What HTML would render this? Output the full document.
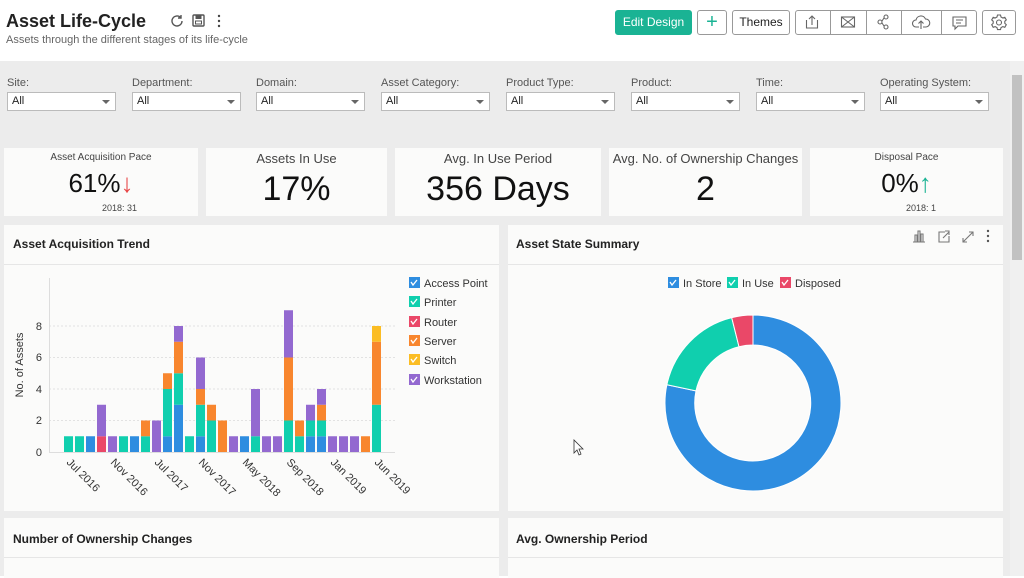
<!DOCTYPE html>
<html><head><meta charset="utf-8"><style>
*{box-sizing:border-box;margin:0;padding:0}
body{width:1024px;height:576px;overflow:hidden;background:#fff;font-family:"Liberation Sans",sans-serif;color:#222;position:relative}
.abs{position:absolute}
.gray{position:absolute;left:0;top:61px;width:1010px;height:515px;background:#ececec}
.sb{position:absolute;left:1010px;top:61px;width:14px;height:515px;background:#f0f0f0}
.sbt{position:absolute;left:1012px;top:75px;width:10px;height:185px;background:#c2c2c2}
.flt{position:absolute;top:77px;font-size:11px;color:#555}
.sel{position:absolute;top:92px;width:109px;height:19px;border:1px solid #bbb;background:#fff;font-size:11px;padding:2px 4px;color:#222}
.sel:after{content:"";position:absolute;right:5px;top:7px;border:4px solid transparent;border-top:4px solid #666}
.card{position:absolute;background:#fbfbfa}
.kt{position:absolute;width:100%;text-align:center;color:#444}
.btn{position:absolute;top:10px;height:25px;border:1px solid #999;border-radius:3px;background:#fff;font-size:12px;text-align:center;line-height:23px}
.ph{position:absolute;left:12px;font-size:12px;font-weight:bold;color:#222}
</style></head><body>
<div class="abs" style="left:6px;top:11px;font-size:18px;font-weight:bold;color:#222">Asset Life-Cycle</div>
<div class="abs" style="left:6px;top:34px;font-size:11px;color:#666">Assets through the different stages of its life-cycle</div>
<svg class="abs" style="left:168px;top:12px" width="60" height="18" viewBox="0 0 60 18">
<path d="M14 9a5 5 0 1 1-1.5-3.6" fill="none" stroke="#555" stroke-width="1.4"/><path d="M13 3v3h-3" fill="none" stroke="#555" stroke-width="1.4"/>
<rect x="25" y="3" width="11" height="11" rx="1" fill="none" stroke="#555" stroke-width="1.4"/><rect x="27.5" y="3" width="6" height="4" fill="#555"/><rect x="27.5" y="9" width="6" height="3" fill="none" stroke="#555"/>
<circle cx="51" cy="4" r="1.2" fill="#444"/><circle cx="51" cy="9" r="1.2" fill="#444"/><circle cx="51" cy="14" r="1.2" fill="#444"/></svg>
<div class="btn" style="left:615px;width:77px;background:#1ab394;border-color:#1ab394;color:#fff">Edit Design</div>
<div class="btn" style="left:697px;width:30px;color:#1ab394;font-size:20px;line-height:22px">+</div>
<div class="btn" style="left:732px;width:58px">Themes</div>
<div class="btn" style="left:795px;width:182px"></div>
<svg class="abs" style="left:795px;top:10px" width="182" height="25" viewBox="0 0 182 25">
<g stroke="#999" fill="none"><line x1="35.5" y1="0" x2="35.5" y2="25"/><line x1="71.5" y1="0" x2="71.5" y2="25"/><line x1="106.5" y1="0" x2="106.5" y2="25"/><line x1="146.5" y1="0" x2="146.5" y2="25"/></g>
<g stroke="#666" fill="none" stroke-width="1.1">
<path d="M11.5 10v8h11v-8M17 15V6M14 9l3-3 3 3"/>
<rect x="46.5" y="7" width="13" height="10"/><path d="M46.5 7l13 10M59.5 7l-13 10"/>
<circle cx="85" cy="12" r="2"/><circle cx="91" cy="7" r="2"/><circle cx="91" cy="17" r="2"/><path d="M87 11l2-3M87 13l2 3"/>
<path d="M124 17h-3a3.5 3.5 0 0 1 0-7 5 5 0 0 1 9.5-1 3.5 3.5 0 0 1 .5 8h-3M126 19v-8M123.5 13.5l2.5-2.5 2.5 2.5"/>
<path d="M158 7h13v9h-8l-3 3v-3h-2z"/><path d="M161 10h7M161 13h5"/></g></svg>
<div class="btn" style="left:982px;width:34px"></div>
<svg class="abs" style="left:982px;top:10px" width="34" height="25"><g stroke="#666" fill="none" stroke-width="1.1"><circle cx="17" cy="12.5" r="2.5"/><path d="M15.5 5h3l.5 2 1.8 1 2-.7 1.5 2.6-1.5 1.4v2l1.5 1.4-1.5 2.6-2-.7-1.8 1-.5 2h-3l-.5-2-1.8-1-2 .7-1.5-2.6 1.5-1.4v-2l-1.5-1.4 1.5-2.6 2 .7 1.8-1z"/></g></svg>

<div class="gray"></div>
<div class="sb"></div><div class="sbt"></div>
<div class="flt" style="left:7px">Site:</div><div class="sel" style="left:7px">All</div>
<div class="flt" style="left:132px">Department:</div><div class="sel" style="left:132px">All</div>
<div class="flt" style="left:256px">Domain:</div><div class="sel" style="left:256px">All</div>
<div class="flt" style="left:381px">Asset Category:</div><div class="sel" style="left:381px">All</div>
<div class="flt" style="left:506px">Product Type:</div><div class="sel" style="left:506px">All</div>
<div class="flt" style="left:631px">Product:</div><div class="sel" style="left:631px">All</div>
<div class="flt" style="left:756px">Time:</div><div class="sel" style="left:756px">All</div>
<div class="flt" style="left:880px">Operating System:</div><div class="sel" style="left:880px">All</div>

<div class="card" style="left:4px;top:148px;width:194px;height:68px"><div class="kt" style="top:4px;font-size:10px">Asset Acquisition Pace</div><div class="kt" style="top:20px;font-size:26px;color:#111">61%<span style="color:#e84848">↓</span></div><div class="abs" style="left:98px;top:55px;font-size:9px;color:#444">2018: 31</div></div>
<div class="card" style="left:206px;top:148px;width:181px;height:68px"><div class="kt" style="top:3px;font-size:13px">Assets In Use</div><div class="kt" style="top:22px;font-size:34px;color:#111">17%</div></div>
<div class="card" style="left:395px;top:148px;width:206px;height:68px"><div class="kt" style="top:3px;font-size:13px">Avg. In Use Period</div><div class="kt" style="top:22px;font-size:34px;color:#111">356 Days</div></div>
<div class="card" style="left:609px;top:148px;width:193px;height:68px"><div class="kt" style="top:3px;font-size:13px">Avg. No. of Ownership Changes</div><div class="kt" style="top:22px;font-size:34px;color:#111">2</div></div>
<div class="card" style="left:810px;top:148px;width:193px;height:68px"><div class="kt" style="top:4px;font-size:10px">Disposal Pace</div><div class="kt" style="top:20px;font-size:26px;color:#111">0%<span style="color:#1ab394">↑</span></div><div class="abs" style="left:96px;top:55px;font-size:9px;color:#444">2018: 1</div></div>

<div class="card" style="left:4px;top:225px;width:495px;height:286px"><div class="ph" style="left:9px;top:12px">Asset Acquisition Trend</div><div class="abs" style="left:0;top:39px;width:100%;height:1px;background:#e6e6e6"></div></div>
<div class="card" style="left:508px;top:225px;width:495px;height:286px"><div class="ph" style="left:8px;top:12px">Asset State Summary</div><div class="abs" style="left:0;top:39px;width:100%;height:1px;background:#e6e6e6"></div></div>
<svg class="abs" style="left:910px;top:228px" width="85" height="16"><g stroke="#777" fill="none" stroke-width="1.1"><path d="M3 14h12M5 14V7h2v7M8 14V3h2v11M11 14V6h2v8"/><path d="M35 4h-6v10h10V8M33 10l6-6M35 3h4v4"/><path d="M53 14l10-10M53 10v4h4M59 4h4v4"/></g><g fill="#555"><circle cx="78" cy="3" r="1.2"/><circle cx="78" cy="8" r="1.2"/><circle cx="78" cy="13" r="1.2"/></g></svg>

<div class="card" style="left:4px;top:518px;width:495px;height:60px"><div class="ph" style="left:9px;top:14px">Number of Ownership Changes</div><div class="abs" style="left:0;top:39px;width:100%;height:1px;background:#e6e6e6"></div></div>
<div class="card" style="left:508px;top:518px;width:495px;height:60px"><div class="ph" style="left:8px;top:14px">Avg. Ownership Period</div><div class="abs" style="left:0;top:39px;width:100%;height:1px;background:#e6e6e6"></div></div>

<svg class="abs" style="left:0;top:0" width="1010" height="576">
<g stroke="#e2e2e2" stroke-dasharray="2 2"><line x1="49" y1="326" x2="395" y2="326"/><line x1="49" y1="357.5" x2="395" y2="357.5"/><line x1="49" y1="389" x2="395" y2="389"/><line x1="49" y1="420.5" x2="395" y2="420.5"/></g>
<line x1="49.5" y1="278" x2="49.5" y2="452" stroke="#ddd"/><line x1="49" y1="452.5" x2="395" y2="452.5" stroke="#ddd"/>
<g font-size="11" fill="#333" text-anchor="end"><text x="42" y="456">0</text><text x="42" y="424">2</text><text x="42" y="393">4</text><text x="42" y="361">6</text><text x="42" y="330">8</text></g>
<text transform="translate(23,365) rotate(-90)" font-size="11" fill="#333" text-anchor="middle">No. of Assets</text>
<g font-size="11" fill="#333">
<text transform="translate(66,463) rotate(45)">Jul 2016</text>
<text transform="translate(110,463) rotate(45)">Nov 2016</text>
<text transform="translate(154,463) rotate(45)">Jul 2017</text>
<text transform="translate(198,463) rotate(45)">Nov 2017</text>
<text transform="translate(242,463) rotate(45)">May 2018</text>
<text transform="translate(286,463) rotate(45)">Sep 2018</text>
<text transform="translate(330,463) rotate(45)">Jan 2019</text>
<text transform="translate(374,463) rotate(45)">Jun 2019</text></g>
<g>
<rect x="64" y="436.25" width="9" height="15.75" fill="#10cfae"/>
<rect x="75" y="436.25" width="9" height="15.75" fill="#10cfae"/>
<rect x="86" y="436.25" width="9" height="15.75" fill="#2e8de0"/>
<rect x="97" y="436.25" width="9" height="15.75" fill="#ea4868"/><rect x="97" y="404.75" width="9" height="31.5" fill="#9369d0"/>
<rect x="108" y="436.25" width="9" height="15.75" fill="#9369d0"/>
<rect x="119" y="436.25" width="9" height="15.75" fill="#10cfae"/>
<rect x="130" y="436.25" width="9" height="15.75" fill="#2e8de0"/>
<rect x="141" y="436.25" width="9" height="15.75" fill="#10cfae"/><rect x="141" y="420.5" width="9" height="15.75" fill="#f8862e"/>
<rect x="152" y="420.5" width="9" height="31.5" fill="#9369d0"/>
<rect x="163" y="436.25" width="9" height="15.75" fill="#2e8de0"/><rect x="163" y="389" width="9" height="47.25" fill="#10cfae"/><rect x="163" y="373.25" width="9" height="15.75" fill="#f8862e"/>
<rect x="174" y="404.75" width="9" height="47.25" fill="#2e8de0"/><rect x="174" y="373.25" width="9" height="31.5" fill="#10cfae"/><rect x="174" y="341.75" width="9" height="31.5" fill="#f8862e"/><rect x="174" y="326" width="9" height="15.75" fill="#9369d0"/>
<rect x="185" y="436.25" width="9" height="15.75" fill="#10cfae"/>
<rect x="196" y="436.25" width="9" height="15.75" fill="#2e8de0"/><rect x="196" y="404.75" width="9" height="31.5" fill="#10cfae"/><rect x="196" y="389" width="9" height="15.75" fill="#f8862e"/><rect x="196" y="357.5" width="9" height="31.5" fill="#9369d0"/>
<rect x="207" y="420.5" width="9" height="31.5" fill="#10cfae"/><rect x="207" y="404.75" width="9" height="15.75" fill="#f8862e"/>
<rect x="218" y="420.5" width="9" height="31.5" fill="#f8862e"/>
<rect x="229" y="436.25" width="9" height="15.75" fill="#9369d0"/>
<rect x="240" y="436.25" width="9" height="15.75" fill="#2e8de0"/>
<rect x="251" y="436.25" width="9" height="15.75" fill="#10cfae"/><rect x="251" y="389" width="9" height="47.25" fill="#9369d0"/>
<rect x="262" y="436.25" width="9" height="15.75" fill="#9369d0"/>
<rect x="273" y="436.25" width="9" height="15.75" fill="#9369d0"/>
<rect x="284" y="420.5" width="9" height="31.5" fill="#10cfae"/><rect x="284" y="357.5" width="9" height="63" fill="#f8862e"/><rect x="284" y="310.25" width="9" height="47.25" fill="#9369d0"/>
<rect x="295" y="436.25" width="9" height="15.75" fill="#10cfae"/><rect x="295" y="420.5" width="9" height="15.75" fill="#f8862e"/>
<rect x="306" y="436.25" width="9" height="15.75" fill="#2e8de0"/><rect x="306" y="420.5" width="9" height="15.75" fill="#10cfae"/><rect x="306" y="404.75" width="9" height="15.75" fill="#9369d0"/>
<rect x="317" y="436.25" width="9" height="15.75" fill="#2e8de0"/><rect x="317" y="420.5" width="9" height="15.75" fill="#10cfae"/><rect x="317" y="404.75" width="9" height="15.75" fill="#f8862e"/><rect x="317" y="389" width="9" height="15.75" fill="#9369d0"/>
<rect x="328" y="436.25" width="9" height="15.75" fill="#9369d0"/>
<rect x="339" y="436.25" width="9" height="15.75" fill="#9369d0"/>
<rect x="350" y="436.25" width="9" height="15.75" fill="#9369d0"/>
<rect x="361" y="436.25" width="9" height="15.75" fill="#f8862e"/>
<rect x="372" y="404.75" width="9" height="47.25" fill="#10cfae"/><rect x="372" y="341.75" width="9" height="63" fill="#f8862e"/><rect x="372" y="326" width="9" height="15.75" fill="#fbbd24"/>
</g>
<g font-size="11" fill="#333">
<rect x="409" y="277" width="11" height="11" fill="#2e8de0"/><text x="424" y="287">Access Point</text>
<rect x="409" y="296" width="11" height="11" fill="#10cfae"/><text x="424" y="306">Printer</text>
<rect x="409" y="316" width="11" height="11" fill="#ea4868"/><text x="424" y="326">Router</text>
<rect x="409" y="335" width="11" height="11" fill="#f8862e"/><text x="424" y="345">Server</text>
<rect x="409" y="354" width="11" height="11" fill="#fbbd24"/><text x="424" y="364">Switch</text>
<rect x="409" y="374" width="11" height="11" fill="#9369d0"/><text x="424" y="384">Workstation</text>
<rect x="668" y="277" width="11" height="11" fill="#2e8de0"/><text x="683" y="287">In Store</text>
<rect x="727" y="277" width="11" height="11" fill="#10cfae"/><text x="742" y="287">In Use</text>
<rect x="780" y="277" width="11" height="11" fill="#ea4868"/><text x="795" y="287">Disposed</text>
</g>
<g fill="none" stroke="#fff" stroke-width="1.3">
<path d="M411 282l2 3 4-5"/><path d="M411 301l2 3 4-5"/><path d="M411 321l2 3 4-5"/><path d="M411 340l2 3 4-5"/><path d="M411 359l2 3 4-5"/><path d="M411 379l2 3 4-5"/>
<path d="M670 282l2 3 4-5"/><path d="M729 282l2 3 4-5"/><path d="M782 282l2 3 4-5"/></g>
<g transform="translate(753,403)" stroke="#fff" stroke-width="1">
<path d="M0 -88A88 88 0 1 1 -86.1 -18.3L-57 -12.1A58 58 0 1 0 0 -58Z" fill="#2e8de0"/>
<path d="M-86.1 -18.3A88 88 0 0 1 -21.3 -85.4L-14 -56.3A58 58 0 0 0 -57 -12.1Z" fill="#10cfae"/>
<path d="M-21.3 -85.4A88 88 0 0 1 0 -88L0 -58A58 58 0 0 0 -14 -56.3Z" fill="#ea4868"/>
</g>
<path d="M574 440v13l3-3 2 5 2-1-2-5h4z" fill="#fff" stroke="#333" stroke-width="0.8"/>
</svg>
</body></html>
